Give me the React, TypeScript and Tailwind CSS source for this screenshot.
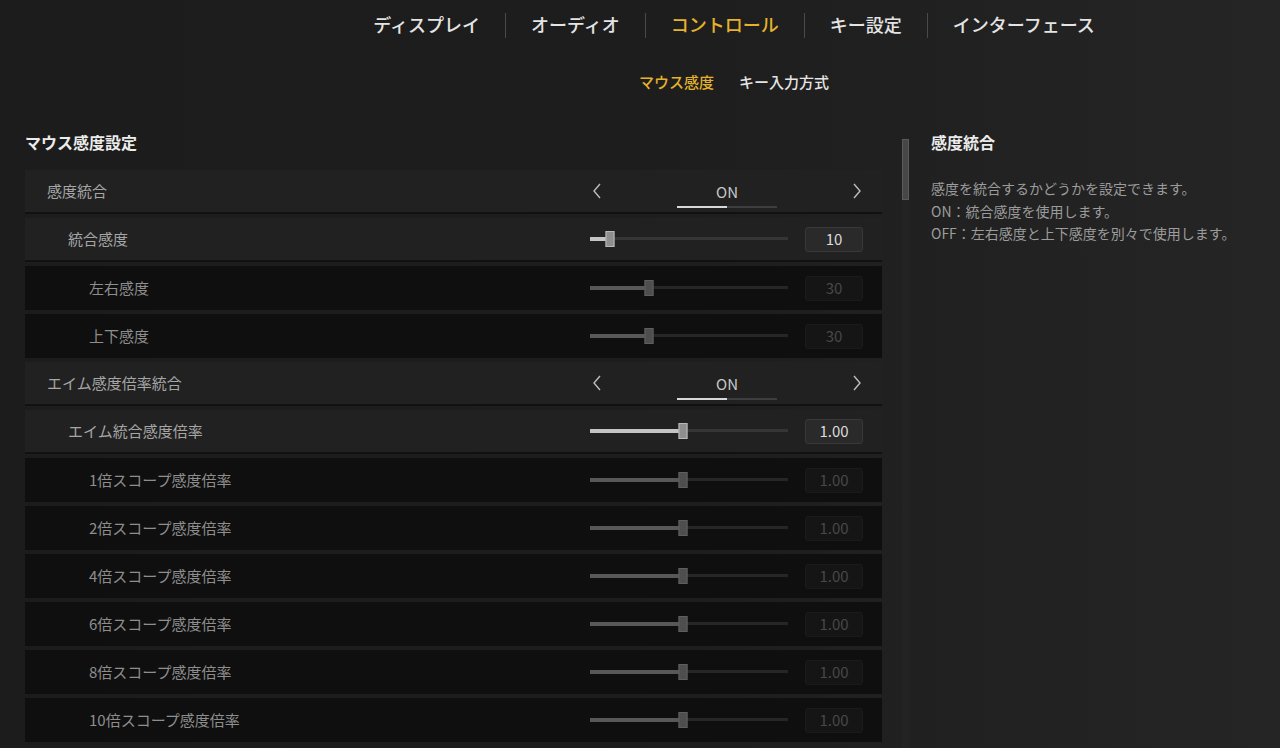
import React from "react";

type Row =
  | { kind: "toggle"; label: string; level: number; value: string }
  | { kind: "slider"; label: string; level: number; value: string; pct: number; active: boolean };

const rows: Row[] = [
  { kind: "toggle", label: "感度統合", level: 0, value: "ON" },
  { kind: "slider", label: "統合感度", level: 1, value: "10", pct: 10, active: true },
  { kind: "slider", label: "左右感度", level: 2, value: "30", pct: 30, active: false },
  { kind: "slider", label: "上下感度", level: 2, value: "30", pct: 30, active: false },
  { kind: "toggle", label: "エイム感度倍率統合", level: 0, value: "ON" },
  { kind: "slider", label: "エイム統合感度倍率", level: 1, value: "1.00", pct: 47, active: true },
  { kind: "slider", label: "1倍スコープ感度倍率", level: 2, value: "1.00", pct: 47, active: false },
  { kind: "slider", label: "2倍スコープ感度倍率", level: 2, value: "1.00", pct: 47, active: false },
  { kind: "slider", label: "4倍スコープ感度倍率", level: 2, value: "1.00", pct: 47, active: false },
  { kind: "slider", label: "6倍スコープ感度倍率", level: 2, value: "1.00", pct: 47, active: false },
  { kind: "slider", label: "8倍スコープ感度倍率", level: 2, value: "1.00", pct: 47, active: false },
  { kind: "slider", label: "10倍スコープ感度倍率", level: 2, value: "1.00", pct: 47, active: false },
];

const tabs = ["ディスプレイ", "オーディオ", "コントロール", "キー設定", "インターフェース"];

const Chevron = ({ dir }: { dir: "left" | "right" }) => (
  <svg width="10" height="16" viewBox="0 0 10 16" fill="none">
    <polyline
      points={dir === "left" ? "8,1 2,8 8,15" : "2,1 8,8 2,15"}
      stroke="#bdbdbd"
      strokeWidth="1.4"
    />
  </svg>
);

const Toggle = ({ value }: { value: string }) => (
  <div className="relative flex h-full w-[272px] items-center justify-between pl-[1px] pr-[1px]">
    <Chevron dir="left" />
    <span className="text-[15px] leading-none text-[#c8c8c8]">{value}</span>
    <Chevron dir="right" />
    <div className="absolute bottom-[4px] left-[86px] flex h-[2px] w-[100px]">
      <div className="h-full w-1/2 bg-[#d8d8d8]" />
      <div className="h-full w-1/2 bg-[#3e3e3e]" />
    </div>
  </div>
);

const Slider = ({ pct, value, active }: { pct: number; value: string; active: boolean }) => (
  <div className="flex items-center">
    <div className="relative h-[16px] w-[198px]">
      <div className={`absolute left-0 right-0 top-[6px] h-[3px] ${active ? "bg-[#353535]" : "bg-[#262626]"}`} />
      <div
        className={`absolute left-0 top-[6px] h-[4px] ${active ? "bg-[#c4c4c4]" : "bg-[#585858]"}`}
        style={{ width: `${pct}%` }}
      />
      <div
        className={`absolute top-0 h-[16px] w-[9px] -translate-x-1/2 border ${
          active ? "border-[#b8b8b8] bg-[#8e8e8e]" : "border-[#5e5e5e] bg-[#4e4e4e]"
        }`}
        style={{ left: `${pct}%` }}
      />
    </div>
    <div
      className={`ml-[17px] flex h-[25px] w-[58px] items-center justify-center rounded-[3px] border text-[15px] ${
        active ? "border-[#383838] bg-[#2a2a2a] text-[#dcdcdc]" : "border-[#1b1b1b] bg-[#151515] text-[#484848]"
      }`}
    >
      {value}
    </div>
  </div>
);

export default function App() {
  return (
    <div
      className="h-[748px] w-[1280px] overflow-hidden bg-gradient-to-r from-[#1c1c1c] via-[#1d1d1d] to-[#252525]"
      style={{ fontFamily: '"Noto Sans CJK JP", "Noto Sans", sans-serif' }}
    >
      <div className="flex justify-center pl-[188px] pt-[9px]">
        {tabs.map((t, i) => (
          <div key={t} className="flex items-center">
            {i > 0 && <div className="mt-[4px] h-[25px] w-px bg-[#4a4a4a]" />}
            <span
              className={`px-[25px] text-[18px] font-medium leading-[26px] ${
                t === "コントロール" ? "text-[#e5b22b]" : "text-[#e4e4e4]"
              }`}
            >
              {t}
            </span>
          </div>
        ))}
      </div>

      <div className="mt-[34px] flex justify-center gap-[25px] pl-[188px] text-[15px] font-medium leading-[20px]">
        <span className="text-[#e5b22b]">マウス感度</span>
        <span className="text-[#e4e4e4]">キー入力方式</span>
      </div>

      <div className="mt-[39px] flex">
        <div className="ml-[25px] w-[857px] shrink-0">
          <h2 className="text-[16px] font-bold leading-[22px] text-[#ececec]">マウス感度設定</h2>
          <div className="mt-[17px]">
            {rows.map((r) => {
              const dark = r.level === 2;
              const pad = r.level === 0 ? "pl-[22px]" : r.level === 1 ? "pl-[43px]" : "pl-[64px]";
              return (
                <div
                  key={r.label}
                  className={`mb-[4px] flex h-[44px] items-center justify-between pr-[19px] ${pad} ${
                    dark ? "bg-[#0f0f0f]" : "border-b-2 border-[#111111] bg-[#212121]"
                  }`}
                >
                  <span className={`text-[15px] ${dark ? "text-[#8e8e8e]" : "text-[#a6a6a6]"}`}>{r.label}</span>
                  {r.kind === "toggle" ? (
                    <Toggle value={r.value} />
                  ) : (
                    <Slider pct={r.pct} value={r.value} active={r.active} />
                  )}
                </div>
              );
            })}
          </div>
        </div>

        <div className="ml-[20px] mt-[8px] flex h-[620px] w-[7px] shrink-0 flex-col bg-[#232323]">
          <div className="h-[61px] w-full border border-[#5a5a5a] bg-[#474747]" />
        </div>

        <div className="ml-[22px] flex-1">
          <h3 className="text-[16px] font-bold leading-[22px] text-[#ececec]">感度統合</h3>
          <div className="mt-[24px] text-[14px] leading-[22.5px] text-[#9c9c9c]">
            <p>感度を統合するかどうかを設定できます。</p>
            <p>ON：統合感度を使用します。</p>
            <p>OFF：左右感度と上下感度を別々で使用します。</p>
          </div>
        </div>
      </div>
    </div>
  );
}
